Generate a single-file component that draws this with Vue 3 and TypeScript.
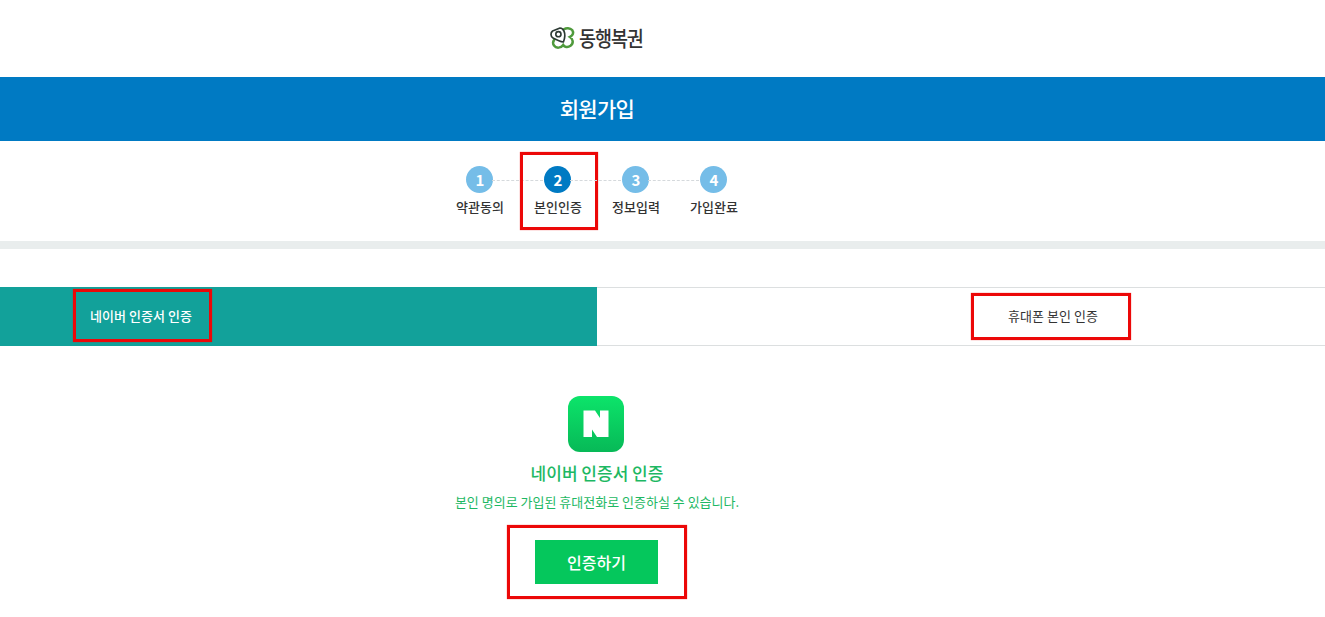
<script setup lang="ts">
const steps = [
  { num: 1, label: '약관동의' },
  { num: 2, label: '본인인증', active: true },
  { num: 3, label: '정보입력' },
  { num: 4, label: '가입완료' },
]
</script>

<template>
  <div class="page">
    <header class="top">
      <div class="logo">
        <svg class="logo-mark" viewBox="0 0 24 22" width="24" height="22" fill="none">
          <path d="M14 2.2C16 0.8 20 0.6 22.2 3C24 5.5 23 8.6 20 10C23 12 24 16 20.5 18.8C17.5 21 14.6 20 13.2 18C11 21.2 6.2 21.6 4 18.6C2.6 16.4 3 14.4 4.2 12.8" stroke="#4f9a3c" stroke-width="2.5" stroke-linecap="round" />
          <path d="M10 1L2.6 4C0.4 5.6 0.4 9.6 3 11C6.4 12.8 10.4 14.6 13.4 15C15 11 15 6.5 14 4.2C13.2 2.2 11.6 1 10 1Z" fill="#fff" stroke="#2d3a34" stroke-width="1.7" stroke-linejoin="round" />
          <circle cx="8.4" cy="7.2" r="2.6" stroke="#2d3a34" stroke-width="1.6" />
        </svg>
        <span class="logo-text">동행복권</span>
      </div>
    </header>

    <div class="title-bar"><h1>회원가입</h1></div>

    <section class="steps-wrap">
      <ol class="steps">
        <li v-for="step in steps" :key="step.num" class="step" :class="{ active: step.active }">
          <span class="circle">{{ step.num }}</span>
          <span class="label">{{ step.label }}</span>
          <i v-if="step.active" class="mark mark-step"></i>
        </li>
      </ol>
    </section>

    <div class="tabs">
      <div class="tab tab-on">
        네이버 인증서 인증
        <i class="mark mark-naver"></i>
      </div>
      <div class="tab tab-off">
        휴대폰 본인 인증
        <i class="mark mark-phone"></i>
      </div>
    </div>

    <main class="auth">
      <div class="naver-icon">
        <svg viewBox="0 0 56 56" width="56" height="56">
          <defs>
            <linearGradient id="naverGrad" x1="0" y1="0" x2="0" y2="1">
              <stop offset="0" stop-color="#0ce46a" />
              <stop offset="1" stop-color="#07b957" />
            </linearGradient>
          </defs>
          <rect width="56" height="56" rx="12" fill="url(#naverGrad)" />
          <path d="M15.5 14.5H27L32 22V14.5H40.5V41H29L24 33.5V41H15.5Z" fill="#fff" />
        </svg>
      </div>
      <h2>네이버 인증서 인증</h2>
      <p>본인 명의로 가입된 휴대전화로 인증하실 수 있습니다.</p>
      <div class="btn-wrap">
        <button class="btn" type="button">인증하기</button>
        <i class="mark mark-btn"></i>
      </div>
    </main>
  </div>
</template>

<style>
html,
body {
  margin: 0;
  background: #fff;
  overflow: hidden;
}
</style>

<style scoped>
.page {
  position: relative;
  height: 617px;
  font-family: "Noto Sans CJK KR", "Noto Sans", sans-serif;
  color: #222;
  overflow: hidden;
}
.top {
  width: 1194px;
  height: 75px;
  padding-bottom: 2px;
  display: flex;
  justify-content: center;
  align-items: center;
}
.logo {
  display: flex;
  align-items: center;
  gap: 5px;
  margin-right: 1px;
}
.logo-mark {
  display: block;
  overflow: visible;
}
.logo-text {
  width: 64px;
  font-size: 21px;
  font-weight: 500;
  letter-spacing: -1.2px;
  color: #333;
  line-height: 1;
  white-space: nowrap;
  transform: scaleX(0.88);
  transform-origin: left center;
}
.title-bar {
  height: 64px;
  background: #007ac3;
  display: flex;
  align-items: center;
}
.title-bar h1 {
  width: 1194px;
  margin: 0 0 2px;
  text-align: center;
  font-size: 21px;
  font-weight: 500;
  letter-spacing: -0.7px;
  color: #fff;
}
.steps-wrap {
  height: 100px;
  border-bottom: 8px solid #e9eded;
}
.steps {
  list-style: none;
  margin: 0;
  padding: 25px 0 0 440px;
  display: flex;
}
.step {
  position: relative;
  width: 78px;
  display: flex;
  flex-direction: column;
  align-items: center;
}
.step:not(:last-child)::after {
  content: "";
  position: absolute;
  left: 52px;
  right: -25px;
  top: 14px;
  border-top: 1px dashed #d5d9dc;
}
.circle {
  box-sizing: border-box;
  width: 27px;
  height: 27px;
  padding-left: 2px;
  border-radius: 50%;
  background: #75bde8;
  color: #fff;
  font-size: 15px;
  font-weight: 700;
  line-height: 27px;
  text-align: center;
}
.step.active .circle {
  background: #007ac3;
}
.label {
  margin-top: 4px;
  margin-left: 2px;
  font-size: 13px;
  font-weight: 500;
  line-height: 20px;
  color: #333;
  white-space: nowrap;
}
.tabs {
  display: flex;
  margin-top: 38px;
  height: 59px;
}
.tab {
  position: relative;
  display: flex;
  align-items: center;
  box-sizing: border-box;
  padding-bottom: 2px;
  font-size: 13px;
  letter-spacing: 0.05px;
  white-space: nowrap;
}
.tab-on {
  width: 597px;
  padding-left: 90px;
  background: #12a19a;
  color: #fff;
  font-weight: 500;
}
.tab-off {
  flex: 1;
  padding-left: 411px;
  border-top: 1px solid #dcdfe0;
  border-bottom: 1px solid #dcdfe0;
  color: #333;
}
.auth {
  width: 1194px;
  padding-top: 50px;
  display: flex;
  flex-direction: column;
  align-items: center;
}
.naver-icon {
  width: 56px;
  height: 56px;
  margin-right: 2px;
}
.naver-icon svg {
  display: block;
}
.auth h2 {
  margin: 8px 0 0;
  font-size: 17px;
  font-weight: 500;
  line-height: 26px;
  color: #1db863;
}
.auth p {
  margin: 6px 0 0;
  font-size: 13px;
  line-height: 20px;
  color: #1db863;
}
.btn-wrap {
  position: relative;
  margin-top: 28px;
  margin-right: 1px;
}
.btn {
  display: block;
  width: 123px;
  height: 44px;
  padding: 0;
  border: 0;
  background: #05c75c;
  color: #fff;
  font-family: inherit;
  font-size: 16px;
  font-weight: 500;
}
/* red annotation boxes drawn over the screenshot */
.mark {
  position: absolute;
  box-sizing: border-box;
  border: 3px solid #ec0808;
  box-shadow: 0 0 1px rgba(236, 8, 8, 0.7);
  pointer-events: none;
}
.mark-step {
  left: 2px;
  top: -14px;
  width: 78px;
  height: 78px;
}
.mark-naver {
  left: 73px;
  top: 2px;
  width: 139px;
  height: 53px;
}
.mark-phone {
  left: 374px;
  top: 5px;
  width: 160px;
  height: 47px;
}
.mark-btn {
  left: -28px;
  top: -15px;
  width: 180px;
  height: 74px;
}
</style>
